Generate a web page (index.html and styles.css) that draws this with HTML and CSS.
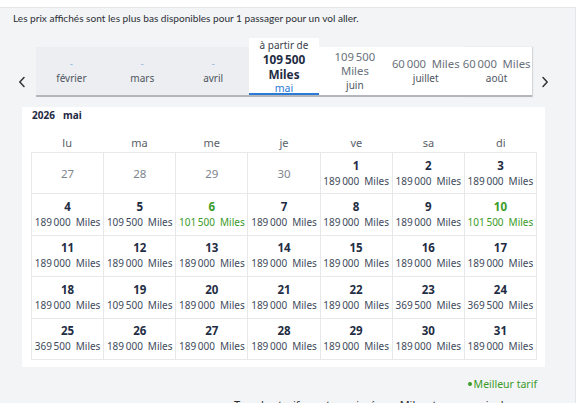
FILE: index.html
```html
<!DOCTYPE html>
<html lang="fr">
<head>
<meta charset="utf-8">
<link rel="stylesheet" href="styles.css">
</head>
<body>
<div class="panel">
  <p class="note">Les prix affichés sont les plus bas disponibles pour 1 passager pour un vol aller.</p>

  <div class="tabs-row">
    <button class="arrow left" aria-label="précédent">
      <svg width="8" height="12" viewBox="0 0 8 12"><path d="M6 1.5 L1.8 6 L6 10.5" fill="none" stroke="#333" stroke-width="1.5" stroke-linecap="round" stroke-linejoin="round"/></svg>
    </button>
    <div class="tabs">
      <div class="tab past"><span class="dash">-</span><span class="mname">février</span></div>
      <div class="tab past"><span class="dash">-</span><span class="mname">mars</span></div>
      <div class="tab past"><span class="dash">-</span><span class="mname">avril</span></div>
      <div class="tab active">
        <span class="from">à partir de</span>
        <span class="big">109&#8239;500</span>
        <span class="big">Miles</span>
        <span class="mname blue">mai</span>
      </div>
      <div class="tab">
        <span class="price">109&#8239;500</span>
        <span class="price">Miles</span>
        <span class="mname">juin</span>
      </div>
      <div class="tab">
        <span class="price">60&#8239;000&ensp;Miles</span>
        <span class="mname">juillet</span>
      </div>
      <div class="tab last">
        <span class="price">60&#8239;000&ensp;Miles</span>
        <span class="mname">août</span>
      </div>
    </div>
    <button class="arrow right" aria-label="suivant">
      <svg width="8" height="12" viewBox="0 0 8 12"><path d="M2 1.5 L6.2 6 L2 10.5" fill="none" stroke="#333" stroke-width="1.5" stroke-linecap="round" stroke-linejoin="round"/></svg>
    </button>
  </div>

  <section class="card">
    <h3 class="title"><span>2026</span><span>mai</span></h3>
    <div class="heads">
      <span>lu</span><span>ma</span><span>me</span><span>je</span><span>ve</span><span>sa</span><span>di</span>
    </div>
    <div class="grid">
      <div class="cell off">27</div>
      <div class="cell off">28</div>
      <div class="cell off">29</div>
      <div class="cell off">30</div>
      <div class="cell"><b>1</b><span>189&#8239;000&ensp;Miles</span></div>
      <div class="cell"><b>2</b><span>189&#8239;000&ensp;Miles</span></div>
      <div class="cell"><b>3</b><span>189&#8239;000&ensp;Miles</span></div>

      <div class="cell"><b>4</b><span>189&#8239;000&ensp;Miles</span></div>
      <div class="cell"><b>5</b><span>109&#8239;500&ensp;Miles</span></div>
      <div class="cell best"><b>6</b><span>101&#8239;500&ensp;Miles</span></div>
      <div class="cell"><b>7</b><span>189&#8239;000&ensp;Miles</span></div>
      <div class="cell"><b>8</b><span>189&#8239;000&ensp;Miles</span></div>
      <div class="cell"><b>9</b><span>189&#8239;000&ensp;Miles</span></div>
      <div class="cell best"><b>10</b><span>101&#8239;500&ensp;Miles</span></div>

      <div class="cell"><b>11</b><span>189&#8239;000&ensp;Miles</span></div>
      <div class="cell"><b>12</b><span>189&#8239;000&ensp;Miles</span></div>
      <div class="cell"><b>13</b><span>189&#8239;000&ensp;Miles</span></div>
      <div class="cell"><b>14</b><span>189&#8239;000&ensp;Miles</span></div>
      <div class="cell"><b>15</b><span>189&#8239;000&ensp;Miles</span></div>
      <div class="cell"><b>16</b><span>189&#8239;000&ensp;Miles</span></div>
      <div class="cell"><b>17</b><span>189&#8239;000&ensp;Miles</span></div>

      <div class="cell"><b>18</b><span>189&#8239;000&ensp;Miles</span></div>
      <div class="cell"><b>19</b><span>109&#8239;500&ensp;Miles</span></div>
      <div class="cell"><b>20</b><span>189&#8239;000&ensp;Miles</span></div>
      <div class="cell"><b>21</b><span>189&#8239;000&ensp;Miles</span></div>
      <div class="cell"><b>22</b><span>189&#8239;000&ensp;Miles</span></div>
      <div class="cell"><b>23</b><span>369&#8239;500&ensp;Miles</span></div>
      <div class="cell"><b>24</b><span>369&#8239;500&ensp;Miles</span></div>

      <div class="cell"><b>25</b><span>369&#8239;500&ensp;Miles</span></div>
      <div class="cell"><b>26</b><span>189&#8239;000&ensp;Miles</span></div>
      <div class="cell"><b>27</b><span>189&#8239;000&ensp;Miles</span></div>
      <div class="cell"><b>28</b><span>189&#8239;000&ensp;Miles</span></div>
      <div class="cell"><b>29</b><span>189&#8239;000&ensp;Miles</span></div>
      <div class="cell"><b>30</b><span>189&#8239;000&ensp;Miles</span></div>
      <div class="cell"><b>31</b><span>189&#8239;000&ensp;Miles</span></div>
    </div>
  </section>

  <p class="legend"><span class="dot"></span>Meilleur tarif</p>
  <p class="foot">Tous les tarifs sont exprimés en Miles, taxes non incluses.</p>
</div>
</body>
</html>
```

FILE: styles.css
```css
* { box-sizing: border-box; }
html, body { margin: 0; padding: 0; }
body {
  background: #ffffff;
  font-family: "Noto Sans", "Liberation Sans", sans-serif;
  color: #1f2a3c;
  width: 580px;
  height: 403px;
  overflow: hidden;
}
.panel {
  margin-top: 7px;
  width: 576px;
  height: 396px;
  background: #f3f4f6;
  border-top: 1px solid #e4e6ea;
  border-right: 1px solid #e4e6ea;
  overflow: hidden;
}
.note {
  margin: 0;
  padding: 3px 0 0 13px;
  font-family: Lato, "Noto Sans", sans-serif;
  font-size: 10.1px;
  line-height: 14px;
  color: #2b2f36;
}
.tabs-row {
  display: flex;
  align-items: center;
  margin-top: 13px;
  height: 59px;
}
.arrow {
  height: 20px;
  margin-top: 28px;
  padding: 0;
  border: 0;
  background: none;
  display: flex;
  align-items: center;
  justify-content: center;
}
.arrow.left { width: 36px; padding-left: 8px; }
.arrow.right { width: 26px; }
.tabs {
  display: flex;
  align-items: flex-end;
  width: 496px;
  height: 59px;
}
.tab {
  flex: 1 1 0;
  height: 50px;
  display: flex;
  flex-direction: column;
  align-items: center;
  justify-content: center;
  background: #ffffff;
  border-bottom: 2px solid #b3b6bb;
  color: #5d6570;
  font-size: 10.5px;
  line-height: 14px;
  white-space: nowrap;
}
.tab.last { box-shadow: 1px 0 1px rgba(0, 0, 0, 0.12); }
.tab.past { background: #eceef1; }
.tab .dash {
  color: #7aaede;
  font-size: 9px;
  line-height: 14px;
}
.tab .mname { font-size: 10px; color: #4e5560; }
.tab .price { font-size: 11.3px; color: #6a717b; }
.tab.active {
  height: 59px;
  box-shadow: inset 0 -2px 0 #2b7bd6;
}
.tab.active .from { font-size: 10px; line-height: 13px; color: #3a404a; }
.tab.active .big { font-size: 11.8px; line-height: 15px; font-weight: 700; color: #1f2d44; }
.tab.active .blue { color: #2b7bd6; font-size: 10.5px; line-height: 13px; }

.card {
  margin: 10px 0 0 22px;
  width: 523px;
  height: 260px;
  background: #ffffff;
  padding: 1px 8px 9px 9px;
}
.title {
  margin: 0;
  padding-left: 1px;
  display: flex;
  gap: 8px;
  font-size: 10px;
  line-height: 14px;
  font-weight: 700;
  color: #1f2a44;
}
.heads {
  display: grid;
  grid-template-columns: repeat(7, 1fr);
  margin-top: 14px;
  height: 16px;
  font-size: 11px;
  line-height: 14px;
  color: #5a6068;
  text-align: center;
}
.grid {
  display: grid;
  grid-template-columns: repeat(7, 1fr);
  grid-auto-rows: 41.4px;
  border-top: 1px solid #e7e8ea;
  border-left: 1px solid #e7e8ea;
}
.cell {
  border-right: 1px solid #e7e8ea;
  border-bottom: 1px solid #e7e8ea;
  display: flex;
  flex-direction: column;
  align-items: center;
  justify-content: center;
  gap: 2px;
  white-space: nowrap;
}
.cell b {
  font-size: 11.5px;
  line-height: 14px;
  font-weight: 700;
  color: #1f2d44;
}
.cell span {
  font-size: 10px;
  line-height: 13px;
  color: #3e4a5c;
}
.cell.off {
  font-size: 11.5px;
  color: #80868d;
}
.cell.best b, .cell.best span { color: #3a9a27; }

.legend {
  margin: 10px 0 0 0;
  width: 537px;
  display: flex;
  justify-content: flex-end;
  align-items: center;
  gap: 2px;
  font-size: 10.5px;
  line-height: 14px;
  color: #3a9a27;
}
.dot {
  width: 4px;
  height: 4px;
  border-radius: 50%;
  background: #3a9a27;
}
.foot {
  margin: 7px 0 0 0;
  width: 530px;
  text-align: right;
  font-size: 11px;
  line-height: 14px;
  color: #2b2f36;
}
```
